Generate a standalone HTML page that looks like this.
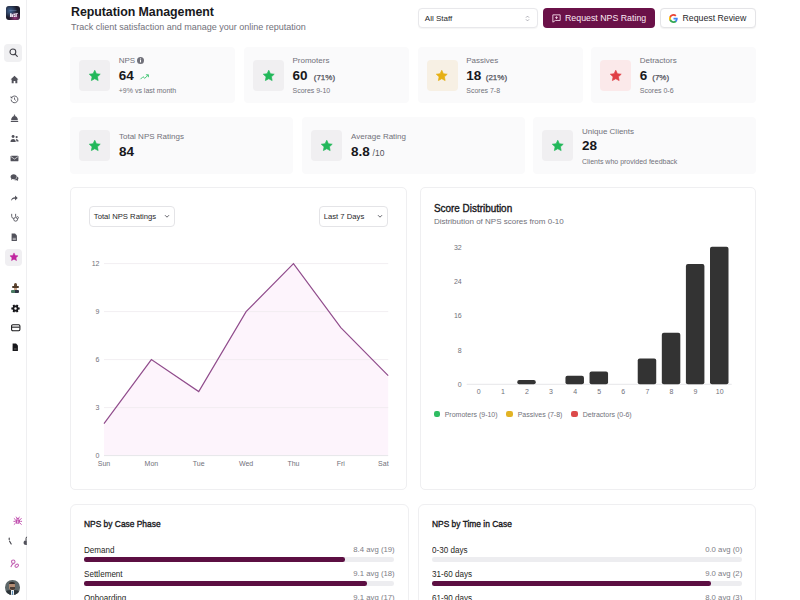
<!DOCTYPE html>
<html><head><meta charset="utf-8"><title>Reputation Management</title>
<style>
html,body{margin:0;padding:0;width:800px;height:600px;overflow:hidden;background:#fff;}
body{position:relative;font-family:"Liberation Sans", sans-serif;}
.t{position:absolute;white-space:nowrap;}
.r{position:absolute;}
svg.r{overflow:visible;}
</style></head><body>
<div class="r" style="left:0.00px;top:0.00px;width:27.00px;height:600.00px;background:#fff;border-radius:0px;border-right:1px solid #efeff1;box-sizing:border-box;"></div>
<svg class="r" style="left:6.00px;top:6.00px;" width="14" height="14" viewBox="0 0 14 14"><defs><radialGradient id="lg1" cx="0.3" cy="0.35" r="0.5"><stop offset="0" stop-color="#4a78b0" stop-opacity="0.8"/><stop offset="1" stop-color="#4a78b0" stop-opacity="0"/></radialGradient><radialGradient id="lg2" cx="0.65" cy="0.85" r="0.45"><stop offset="0" stop-color="#b03a8a" stop-opacity="0.8"/><stop offset="1" stop-color="#b03a8a" stop-opacity="0"/></radialGradient></defs><rect x="0" y="0" width="14" height="14" rx="3" fill="#1c1c2c"/><rect x="0" y="0" width="14" height="14" rx="3" fill="url(#lg1)"/><rect x="0" y="0" width="14" height="14" rx="3" fill="url(#lg2)"/><path d="M4 7.2h1.6v3.8H4zM5.8 8.2h1.4v2.8H5.8zM7.5 7.6h1.5v1.4H7.5zM7.8 9.4h1.3v1.6H7.8zM9.4 7h1.4v4H9.4zM10.9 7.4l.9-.6.3.8-.9.5z" fill="#e8e4f0"/><path d="M3.5 4.5h7" stroke="#8aa0c8" stroke-width="0.6" opacity="0.6"/></svg>
<div class="r" style="left:4.00px;top:43.50px;width:18.00px;height:18.00px;background:#f0f0f2;border-radius:4px;"></div>
<svg class="r" style="left:8.50px;top:48.00px;" width="9" height="9" viewBox="0 0 9 9"><circle cx="3.9" cy="3.9" r="2.9" fill="none" stroke="#3f3f46" stroke-width="1.05"/><path d="M6.1 6.1l2.2 2.2" stroke="#3f3f46" stroke-width="1.15" stroke-linecap="round"/></svg>
<svg class="r" style="left:9.50px;top:74.50px;" width="9" height="9" viewBox="0 0 16 16"><path d="M8 1.5L1 8h2v6.5h3.5v-4h3v4H13V8h2z" fill="#52525b"/></svg>
<svg class="r" style="left:9.50px;top:94.50px;" width="9" height="9" viewBox="0 0 16 16"><path d="M3.2 4.2A6 6 0 1 1 2 8" fill="none" stroke="#52525b" stroke-width="1.6"/><path d="M1.2 1.8v4h4z" fill="#52525b"/><path d="M8 4.5V8l2.3 1.6" fill="none" stroke="#52525b" stroke-width="1.5"/></svg>
<svg class="r" style="left:9.50px;top:113.50px;" width="9" height="9" viewBox="0 0 16 16"><circle cx="8" cy="2.2" r="1.3" fill="#52525b"/><path d="M2 11.2C2 6.6 4.6 3.4 8 3.4s6 3.2 6 7.8z" fill="#52525b"/><rect x="1.2" y="12.4" width="13.6" height="1.8" rx=".9" fill="#52525b"/></svg>
<svg class="r" style="left:9.50px;top:133.50px;" width="9" height="9" viewBox="0 0 16 16"><circle cx="5.5" cy="4.5" r="2.6" fill="#52525b"/><path d="M0.8 14c0-3 2-5 4.7-5s4.7 2 4.7 5z" fill="#52525b"/><circle cx="11.8" cy="5.5" r="2" fill="#52525b"/><path d="M10.5 9c2.8 0 4.7 1.6 4.7 4.2h-3.6z" fill="#52525b"/></svg>
<svg class="r" style="left:9.50px;top:153.50px;" width="9" height="9" viewBox="0 0 16 16"><rect x="1" y="3" width="14" height="10" rx="1.5" fill="#52525b"/><path d="M1.5 4.5L8 9l6.5-4.5" fill="none" stroke="#fff" stroke-width="1.2"/></svg>
<svg class="r" style="left:9.50px;top:173.00px;" width="9" height="9" viewBox="0 0 16 16"><path d="M1 6.5C1 3.5 3.5 2 6.5 2S12 3.5 12 6.5 9.5 11 6.5 11c-.8 0-1.5-.1-2.1-.3L1.8 12.5l.6-2.6C1.5 9 1 7.8 1 6.5z" fill="#52525b"/><path d="M13 6c1.3.8 2 2 2 3.4 0 1-.4 1.9-1 2.6l.4 2.2-2.2-1.3c-.5.2-1.1.2-1.7.2-1.5 0-2.8-.5-3.7-1.3C10.4 11.6 13 9.3 13 6z" fill="#52525b"/></svg>
<svg class="r" style="left:9.75px;top:193.75px;" width="8.5" height="8.5" viewBox="0 0 16 16"><path d="M2 13c0-4.5 3-7 7.5-7V3l5 4.5-5 4.5V9C6 9 3.8 10.2 2 13z" fill="#52525b"/></svg>
<svg class="r" style="left:9.50px;top:213.00px;" width="9" height="9" viewBox="0 0 16 16"><path d="M3 1.5v4.5a3.5 3.5 0 0 0 7 0V1.5" fill="none" stroke="#52525b" stroke-width="1.6"/><path d="M6.5 9.5v1.5a3.5 3.5 0 0 0 7 0v-1" fill="none" stroke="#52525b" stroke-width="1.6"/><circle cx="13.2" cy="8.3" r="1.8" fill="none" stroke="#52525b" stroke-width="1.5"/></svg>
<svg class="r" style="left:9.75px;top:233.25px;" width="8.5" height="8.5" viewBox="0 0 16 16"><path d="M3 1h6.5L13 4.5V15H3z" fill="#52525b"/><path d="M5 10h6M5 12.3h6" stroke="#fff" stroke-width="1"/></svg>
<div class="r" style="left:4.50px;top:248.50px;width:17.00px;height:17.00px;background:#f0eff2;border-radius:4px;"></div>
<svg class="r" style="left:9.00px;top:252.30px;" width="10" height="10" viewBox="0 0 24 24"><path d="M12 2.2l2.95 6.2 6.75.85-4.95 4.65 1.25 6.7L12 17.3l-5.99 3.3 1.25-6.7L2.3 9.25l6.75-.85z" fill="#c0269f" stroke="#c0269f" stroke-width="1.2" stroke-linejoin="round"/></svg>
<div class="r" style="left:11px;top:282.5px;width:8px;height:10px;"><div style="position:absolute;left:2.5px;top:0;width:3px;height:4px;background:#5e4630;border-radius:1.5px 1.5px 0 0"></div><div style="position:absolute;left:0.5px;top:3.6px;width:7px;height:1.8px;background:#4e3a28;border-radius:1px"></div><div style="position:absolute;left:2.5px;top:5px;width:3px;height:2.2px;background:#c9a58a"></div><div style="position:absolute;left:0;top:7px;width:4px;height:3px;background:#4a7a62;border-radius:1px 0 0 1px"></div><div style="position:absolute;left:4px;top:7px;width:4px;height:3px;background:#2f3442;border-radius:0 1px 1px 0"></div></div>
<svg class="r" style="left:10.70px;top:303.50px;" width="9" height="9" viewBox="0 0 16 16"><path d="M13.24 6.03 L15.42 6.34 L15.42 9.66 L13.24 9.97 L12.85 10.80 L12.33 11.55 L13.14 13.59 L10.27 15.25 L8.91 13.53 L8.00 13.60 L7.09 13.53 L5.73 15.25 L2.86 13.59 L3.67 11.55 L3.15 10.80 L2.76 9.97 L0.58 9.66 L0.58 6.34 L2.76 6.03 L3.15 5.20 L3.67 4.45 L2.86 2.41 L5.73 0.75 L7.09 2.47 L8.00 2.40 L8.91 2.47 L10.27 0.75 L13.14 2.41 L12.33 4.45 L12.85 5.20z" fill="#18181b"/><circle cx="8" cy="8" r="2.1" fill="#fff"/></svg>
<svg class="r" style="left:10.65px;top:322.75px;" width="9.5" height="9.5" viewBox="0 0 16 16"><rect x="1" y="3" width="14" height="10" rx="2" fill="none" stroke="#18181b" stroke-width="1.8"/><path d="M1.5 7h13" stroke="#18181b" stroke-width="1.8"/></svg>
<svg class="r" style="left:10.85px;top:343.25px;" width="8.5" height="8.5" viewBox="0 0 16 16"><path d="M3 1h6.5L13 4.5V15H3z" fill="#18181b"/><rect x="5.5" y="10" width="5" height="2.5" fill="#555"/></svg>
<svg class="r" style="left:13.05px;top:516.05px;" width="9.5" height="9.5" viewBox="0 0 16 16"><path d="M4.2 6.5h7.6v3.2a3.8 3.8 0 0 1-7.6 0z" fill="#c04fae"/><path d="M5.2 6c0-1.7 1.3-3 2.8-3s2.8 1.3 2.8 3z" fill="#c04fae"/><path d="M8 7.5v5.3" stroke="#fff" stroke-width="1.3"/><path d="M.8 9h3M12.2 9h3M1.5 4l2.8 2.2M14.5 4l-2.8 2.2M1.5 14.5l2.8-2.5M14.5 14.5l-2.8-2.5M5 1.2l1.2 2M11 1.2l-1.2 2" stroke="#c04fae" stroke-width="1.6"/></svg>
<svg class="r" style="left:8.00px;top:537.00px;" width="4" height="8" viewBox="0 0 4 8"><path d="M1.2 1v1.6M1.6 4.2l1.6 2.8" stroke="#3f3f46" stroke-width="1.1" stroke-linecap="round"/></svg>
<svg class="r" style="left:22.50px;top:535.50px;" width="5" height="10" viewBox="0 0 5 10"><path d="M3.6 .8c-.6 1-.7 2-.6 3.2" stroke="#3f3f46" stroke-width="1" fill="none"/><path d="M3 4.2c-1.6 0-2.4 1.2-2.4 2.5S1.6 9 3 9h.8V4.3z" fill="#52525b"/></svg>
<svg class="r" style="left:9.75px;top:558.75px;" width="9.5" height="9.5" viewBox="0 0 16 16"><circle cx="5.5" cy="4.5" r="2.9" fill="none" stroke="#c25fb2" stroke-width="1.8"/><path d="M1.5 13.8c.5-2.8 1.8-4.6 4-5.2" fill="none" stroke="#c25fb2" stroke-width="1.8"/><ellipse cx="11.3" cy="11.3" rx="3.2" ry="2.3" transform="rotate(-35 11.3 11.3)" fill="none" stroke="#c25fb2" stroke-width="1.8"/></svg>
<div class="r" style="left:5px;top:580px;width:14.5px;height:14.5px;border-radius:50%;background:#5d6769;overflow:hidden"><div style="position:absolute;left:4.3px;top:2.2px;width:6px;height:7.5px;border-radius:45% 45% 40% 40%;background:#b38d74"></div><div style="position:absolute;left:4.1px;top:1.8px;width:6.4px;height:2.4px;border-radius:3px 3px 0 0;background:#2e2a28"></div><div style="position:absolute;left:4.6px;top:6.5px;width:5.4px;height:3.2px;border-radius:0 0 45% 45%;background:#4a3c34"></div><div style="position:absolute;left:1px;top:10px;width:12.5px;height:6px;border-radius:40% 40% 0 0;background:#2c3438"></div><div style="position:absolute;left:5.6px;top:9.8px;width:3.4px;height:5px;background:#e6ecef"></div><div style="position:absolute;left:6.7px;top:10.5px;width:1.2px;height:4.5px;background:#5b8fb8"></div></div>
<div class="t" style="left:71.00px;top:6.20px;font-size:12.4px;line-height:12.4px;color:#18181b;font-weight:700;letter-spacing:-0.05px;">Reputation Management</div>
<div class="t" style="left:71.00px;top:22.88px;font-size:9px;line-height:9px;color:#71717a;font-weight:400;">Track client satisfaction and manage your online reputation</div>
<div class="r" style="left:417.50px;top:8.00px;width:120.50px;height:20.00px;background:#fff;border:1px solid #e8e8eb;box-sizing:border-box;border-radius:4px;box-shadow:0 0.5px 1px rgba(0,0,0,0.04);"></div>
<div class="t" style="left:424.80px;top:14.53px;font-size:8px;line-height:8px;color:#27272a;font-weight:400;">All Staff</div>
<svg class="r" style="left:524.50px;top:14.50px;" width="5" height="7" viewBox="0 0 5 7"><path d="M1 2.6L2.5 1.1 4 2.6M1 4.4L2.5 5.9 4 4.4" fill="none" stroke="#a1a1aa" stroke-width="0.9"/></svg>
<div class="r" style="left:543.00px;top:8.20px;width:112.00px;height:19.50px;background:#6a1148;border-radius:4px;"></div>
<svg class="r" style="left:551.50px;top:13.50px;" width="9" height="9" viewBox="0 0 16 16"><path d="M1.5 1.5h13v10H6l-4.5 3z" fill="none" stroke="#f5d9ea" stroke-width="1.6" stroke-linejoin="round"/><path d="M8 4v5M5.5 6.5h5" stroke="#f5d9ea" stroke-width="1.5"/></svg>
<div class="t" style="left:565.00px;top:14.25px;font-size:8.8px;line-height:8.8px;color:#fbe9f4;font-weight:400;">Request NPS Rating</div>
<div class="r" style="left:659.50px;top:8.20px;width:96.50px;height:20.00px;background:#fff;border:1px solid #e4e4e7;box-sizing:border-box;border-radius:4px;box-shadow:0 0.5px 1px rgba(0,0,0,0.05);"></div>
<svg class="r" style="left:668.50px;top:13.80px;" width="9" height="9" viewBox="0 0 16 16"><path d="M15.5 8.2c0-.6-.05-1.1-.15-1.6H8v3h4.2c-.2 1-.8 1.9-1.7 2.4v2h2.7c1.5-1.4 2.3-3.4 2.3-5.8z" fill="#4285F4"/><path d="M8 16c2.2 0 4-.7 5.3-2l-2.7-2c-.7.5-1.6.8-2.6.8-2 0-3.8-1.4-4.4-3.3H.8v2.1C2.1 14.3 4.9 16 8 16z" fill="#34A853"/><path d="M3.6 9.5c-.2-.5-.3-1-.3-1.5s.1-1 .3-1.5V4.4H.8C.3 5.5 0 6.7 0 8s.3 2.5.8 3.6z" fill="#FBBC05"/><path d="M8 3.2c1.2 0 2.2.4 3 1.2l2.3-2.3C11.9.8 10.1 0 8 0 4.9 0 2.1 1.7.8 4.4l2.8 2.1C4.2 4.6 6 3.2 8 3.2z" fill="#EA4335"/></svg>
<div class="t" style="left:682.50px;top:14.39px;font-size:8.75px;line-height:8.75px;color:#27272a;font-weight:400;">Request Review</div>
<div class="r" style="left:70.00px;top:46.80px;width:165.00px;height:56.70px;background:#fafafb;border-radius:4px;"></div>
<div class="r" style="left:79.00px;top:60.00px;width:31.00px;height:31.00px;background:#f0eff1;border-radius:4px;"></div>
<svg class="r" style="left:87.75px;top:68.75px;" width="13.5" height="13.5" viewBox="0 0 24 24"><path d="M12 2.2l2.95 6.2 6.75.85-4.95 4.65 1.25 6.7L12 17.3l-5.99 3.3 1.25-6.7L2.3 9.25l6.75-.85z" fill="#22b85a" stroke="#22b85a" stroke-width="1.2" stroke-linejoin="round"/></svg>
<div class="t" style="left:118.75px;top:57.23px;font-size:8px;line-height:8px;color:#71717a;font-weight:400;">NPS</div>
<div class="t" style="left:118.75px;top:68.87px;font-size:13.5px;line-height:13.5px;color:#18181b;font-weight:700;">64</div>
<div class="t" style="left:118.75px;top:86.87px;font-size:7px;line-height:7px;color:#71717a;font-weight:400;">+9% vs last month</div>
<div class="r" style="left:243.75px;top:46.80px;width:165.00px;height:56.70px;background:#fafafb;border-radius:4px;"></div>
<div class="r" style="left:252.75px;top:60.00px;width:31.00px;height:31.00px;background:#f0eff1;border-radius:4px;"></div>
<svg class="r" style="left:261.50px;top:68.75px;" width="13.5" height="13.5" viewBox="0 0 24 24"><path d="M12 2.2l2.95 6.2 6.75.85-4.95 4.65 1.25 6.7L12 17.3l-5.99 3.3 1.25-6.7L2.3 9.25l6.75-.85z" fill="#22b85a" stroke="#22b85a" stroke-width="1.2" stroke-linejoin="round"/></svg>
<div class="t" style="left:292.50px;top:57.23px;font-size:8px;line-height:8px;color:#71717a;font-weight:400;">Promoters</div>
<div class="t" style="left:292.50px;top:68.87px;font-size:13.5px;line-height:13.5px;color:#18181b;font-weight:700;">60</div>
<div class="t" style="left:313.75px;top:73.83px;font-size:8px;line-height:8px;color:#52525b;font-weight:400;-webkit-text-stroke:0.25px #52525b;">(71%)</div>
<div class="t" style="left:292.50px;top:86.87px;font-size:7px;line-height:7px;color:#71717a;font-weight:400;">Scores 9-10</div>
<div class="r" style="left:417.50px;top:46.80px;width:165.00px;height:56.70px;background:#fafafb;border-radius:4px;"></div>
<div class="r" style="left:426.50px;top:60.00px;width:31.00px;height:31.00px;background:#f7f0e4;border-radius:4px;"></div>
<svg class="r" style="left:435.25px;top:68.75px;" width="13.5" height="13.5" viewBox="0 0 24 24"><path d="M12 2.2l2.95 6.2 6.75.85-4.95 4.65 1.25 6.7L12 17.3l-5.99 3.3 1.25-6.7L2.3 9.25l6.75-.85z" fill="#e6b014" stroke="#e6b014" stroke-width="1.2" stroke-linejoin="round"/></svg>
<div class="t" style="left:466.25px;top:57.23px;font-size:8px;line-height:8px;color:#71717a;font-weight:400;">Passives</div>
<div class="t" style="left:466.25px;top:68.87px;font-size:13.5px;line-height:13.5px;color:#18181b;font-weight:700;">18</div>
<div class="t" style="left:485.75px;top:73.83px;font-size:8px;line-height:8px;color:#52525b;font-weight:400;-webkit-text-stroke:0.25px #52525b;">(21%)</div>
<div class="t" style="left:466.25px;top:86.87px;font-size:7px;line-height:7px;color:#71717a;font-weight:400;">Scores 7-8</div>
<div class="r" style="left:591.00px;top:46.80px;width:165.00px;height:56.70px;background:#fafafb;border-radius:4px;"></div>
<div class="r" style="left:600.00px;top:60.00px;width:31.00px;height:31.00px;background:#fbe9ea;border-radius:4px;"></div>
<svg class="r" style="left:608.75px;top:68.75px;" width="13.5" height="13.5" viewBox="0 0 24 24"><path d="M12 2.2l2.95 6.2 6.75.85-4.95 4.65 1.25 6.7L12 17.3l-5.99 3.3 1.25-6.7L2.3 9.25l6.75-.85z" fill="#e03e45" stroke="#e03e45" stroke-width="1.2" stroke-linejoin="round"/></svg>
<div class="t" style="left:639.75px;top:57.23px;font-size:8px;line-height:8px;color:#71717a;font-weight:400;">Detractors</div>
<div class="t" style="left:639.75px;top:68.87px;font-size:13.5px;line-height:13.5px;color:#18181b;font-weight:700;">6</div>
<div class="t" style="left:652.25px;top:73.83px;font-size:8px;line-height:8px;color:#52525b;font-weight:400;-webkit-text-stroke:0.25px #52525b;">(7%)</div>
<div class="t" style="left:639.75px;top:86.87px;font-size:7px;line-height:7px;color:#71717a;font-weight:400;">Scores 0-6</div>
<svg class="r" style="left:137.00px;top:57.20px;" width="7" height="7" viewBox="0 0 7 7"><circle cx="3.5" cy="3.5" r="3.5" fill="#71717a"/><path d="M3.5 3v2.4" stroke="#fff" stroke-width="1"/><circle cx="3.5" cy="1.9" r=".55" fill="#fff"/></svg>
<svg class="r" style="left:139.50px;top:73.50px;" width="9" height="6" viewBox="0 0 9 6"><path d="M.5 5.2L3 2.7l1.8 1.6L8.2 1" fill="none" stroke="#34c26a" stroke-width="0.9"/><path d="M5.9 .8h2.5v2.4" fill="none" stroke="#34c26a" stroke-width="0.9"/></svg>
<div class="r" style="left:70.00px;top:117.40px;width:223.00px;height:56.30px;background:#fafafb;border-radius:4px;"></div>
<div class="r" style="left:79.00px;top:130.00px;width:31.00px;height:31.00px;background:#f0eff1;border-radius:4px;"></div>
<svg class="r" style="left:87.75px;top:138.95px;" width="13.5" height="13.5" viewBox="0 0 24 24"><path d="M12 2.2l2.95 6.2 6.75.85-4.95 4.65 1.25 6.7L12 17.3l-5.99 3.3 1.25-6.7L2.3 9.25l6.75-.85z" fill="#22b85a" stroke="#22b85a" stroke-width="1.2" stroke-linejoin="round"/></svg>
<div class="t" style="left:119.00px;top:133.13px;font-size:8px;line-height:8px;color:#71717a;font-weight:400;">Total NPS Ratings</div>
<div class="t" style="left:119.00px;top:144.87px;font-size:13.5px;line-height:13.5px;color:#18181b;font-weight:700;">84</div>
<div class="r" style="left:302.00px;top:117.40px;width:223.00px;height:56.30px;background:#fafafb;border-radius:4px;"></div>
<div class="r" style="left:311.00px;top:130.00px;width:31.00px;height:31.00px;background:#f0eff1;border-radius:4px;"></div>
<svg class="r" style="left:319.75px;top:138.95px;" width="13.5" height="13.5" viewBox="0 0 24 24"><path d="M12 2.2l2.95 6.2 6.75.85-4.95 4.65 1.25 6.7L12 17.3l-5.99 3.3 1.25-6.7L2.3 9.25l6.75-.85z" fill="#22b85a" stroke="#22b85a" stroke-width="1.2" stroke-linejoin="round"/></svg>
<div class="t" style="left:351.00px;top:133.13px;font-size:8px;line-height:8px;color:#71717a;font-weight:400;">Average Rating</div>
<div class="t" style="left:351.00px;top:144.87px;font-size:13.5px;line-height:13.5px;color:#18181b;font-weight:700;">8.8</div>
<div class="t" style="left:372.60px;top:149.10px;font-size:8.5px;line-height:8.5px;color:#52525b;font-weight:400;">/10</div>
<div class="r" style="left:533.00px;top:117.40px;width:223.00px;height:56.30px;background:#fafafb;border-radius:4px;"></div>
<div class="r" style="left:542.00px;top:130.00px;width:31.00px;height:31.00px;background:#f0eff1;border-radius:4px;"></div>
<svg class="r" style="left:550.75px;top:138.95px;" width="13.5" height="13.5" viewBox="0 0 24 24"><path d="M12 2.2l2.95 6.2 6.75.85-4.95 4.65 1.25 6.7L12 17.3l-5.99 3.3 1.25-6.7L2.3 9.25l6.75-.85z" fill="#22b85a" stroke="#22b85a" stroke-width="1.2" stroke-linejoin="round"/></svg>
<div class="t" style="left:582.00px;top:127.73px;font-size:8px;line-height:8px;color:#71717a;font-weight:400;">Unique Clients</div>
<div class="t" style="left:582.00px;top:139.27px;font-size:13.5px;line-height:13.5px;color:#18181b;font-weight:700;">28</div>
<div class="t" style="left:582.00px;top:157.57px;font-size:7px;line-height:7px;color:#71717a;font-weight:400;">Clients who provided feedback</div>
<div class="r" style="left:70.00px;top:187.00px;width:336.50px;height:303.00px;background:#fff;border:1px solid #efeff1;box-sizing:border-box;border-radius:5px;"></div>
<div class="r" style="left:88.50px;top:205.50px;width:86.50px;height:21.00px;background:#fff;border:1px solid #e4e4e7;box-sizing:border-box;border-radius:4px;"></div>
<div class="t" style="left:93.80px;top:212.78px;font-size:7.7px;line-height:7.7px;color:#27272a;font-weight:400;">Total NPS Ratings</div>
<svg class="r" style="left:163.50px;top:213.50px;" width="6" height="5" viewBox="0 0 6 5"><path d="M1 1.2l2 2 2-2" fill="none" stroke="#52525b" stroke-width="0.9"/></svg>
<div class="r" style="left:318.70px;top:205.50px;width:69.80px;height:21.00px;background:#fff;border:1px solid #e4e4e7;box-sizing:border-box;border-radius:4px;"></div>
<div class="t" style="left:323.70px;top:212.78px;font-size:7.7px;line-height:7.7px;color:#27272a;font-weight:400;">Last 7 Days</div>
<svg class="r" style="left:376.50px;top:213.50px;" width="6" height="5" viewBox="0 0 6 5"><path d="M1 1.2l2 2 2-2" fill="none" stroke="#52525b" stroke-width="0.9"/></svg>
<svg class="r" style="left:0.00px;top:0.00px;" width="800" height="600" viewBox="0 0 800 600"><polygon points="104,455.6 104.00,423.60 151.37,359.60 198.73,391.60 246.10,311.60 293.47,263.60 340.83,327.60 388.20,375.60 388.2,455.6" fill="#fdf4fc"/><line x1="104" y1="407.60" x2="388.2" y2="407.60" stroke="#eeeaee" stroke-opacity="0.8" stroke-width="1"/><line x1="104" y1="359.60" x2="388.2" y2="359.60" stroke="#eeeaee" stroke-opacity="0.8" stroke-width="1"/><line x1="104" y1="311.60" x2="388.2" y2="311.60" stroke="#eeeaee" stroke-opacity="0.8" stroke-width="1"/><line x1="104" y1="263.60" x2="388.2" y2="263.60" stroke="#eeeaee" stroke-opacity="0.8" stroke-width="1"/><line x1="104" y1="455.6" x2="388.2" y2="455.6" stroke="#e6e6e9" stroke-width="1"/><polyline points="104.00,423.60 151.37,359.60 198.73,391.60 246.10,311.60 293.47,263.60 340.83,327.60 388.20,375.60" fill="none" stroke="#904c8c" stroke-width="1.2" stroke-linejoin="miter"/></svg>
<div class="t" style="right:700.50px;top:452.47px;font-size:7px;line-height:7px;color:#71717a;font-weight:400;">0</div>
<div class="t" style="right:700.50px;top:404.47px;font-size:7px;line-height:7px;color:#71717a;font-weight:400;">3</div>
<div class="t" style="right:700.50px;top:356.47px;font-size:7px;line-height:7px;color:#71717a;font-weight:400;">6</div>
<div class="t" style="right:700.50px;top:308.47px;font-size:7px;line-height:7px;color:#71717a;font-weight:400;">9</div>
<div class="t" style="right:700.50px;top:260.47px;font-size:7px;line-height:7px;color:#71717a;font-weight:400;">12</div>
<div class="t" style="left:4.00px;width:200px;text-align:center;top:459.57px;font-size:7px;line-height:7px;color:#71717a;font-weight:400;">Sun</div>
<div class="t" style="left:51.37px;width:200px;text-align:center;top:459.57px;font-size:7px;line-height:7px;color:#71717a;font-weight:400;">Mon</div>
<div class="t" style="left:98.73px;width:200px;text-align:center;top:459.57px;font-size:7px;line-height:7px;color:#71717a;font-weight:400;">Tue</div>
<div class="t" style="left:146.10px;width:200px;text-align:center;top:459.57px;font-size:7px;line-height:7px;color:#71717a;font-weight:400;">Wed</div>
<div class="t" style="left:193.47px;width:200px;text-align:center;top:459.57px;font-size:7px;line-height:7px;color:#71717a;font-weight:400;">Thu</div>
<div class="t" style="left:240.83px;width:200px;text-align:center;top:459.57px;font-size:7px;line-height:7px;color:#71717a;font-weight:400;">Fri</div>
<div class="t" style="right:411.40px;top:459.57px;font-size:7px;line-height:7px;color:#71717a;font-weight:400;">Sat</div>
<div class="r" style="left:420.00px;top:187.00px;width:336.00px;height:303.00px;background:#fff;border:1px solid #efeff1;box-sizing:border-box;border-radius:5px;"></div>
<div class="t" style="left:433.90px;top:203.94px;font-size:10px;line-height:10px;color:#18181b;font-weight:400;transform:scaleX(0.99);transform-origin:0 0;-webkit-text-stroke:0.35px #18181b;">Score Distribution</div>
<div class="t" style="left:433.90px;top:218.23px;font-size:8px;line-height:8px;color:#71717a;font-weight:400;">Distribution of NPS scores from 0-10</div>
<svg class="r" style="left:0.00px;top:0.00px;" width="800" height="600" viewBox="0 0 800 600"><line x1="466.7" y1="384.3" x2="731.7" y2="384.3" stroke="#e6e6e9" stroke-width="1"/><rect x="517.28" y="380.00" width="18.5" height="4.30" rx="2" fill="#333333"/><rect x="565.46" y="375.70" width="18.5" height="8.60" rx="2" fill="#333333"/><rect x="589.55" y="371.40" width="18.5" height="12.90" rx="2" fill="#333333"/><rect x="637.73" y="358.50" width="18.5" height="25.80" rx="2" fill="#333333"/><rect x="661.82" y="332.70" width="18.5" height="51.60" rx="2" fill="#333333"/><rect x="685.91" y="263.90" width="18.5" height="120.40" rx="2" fill="#333333"/><rect x="710.00" y="246.70" width="18.5" height="137.60" rx="2" fill="#333333"/></svg>
<div class="t" style="right:338.30px;top:381.17px;font-size:7px;line-height:7px;color:#71717a;font-weight:400;">0</div>
<div class="t" style="right:338.30px;top:346.77px;font-size:7px;line-height:7px;color:#71717a;font-weight:400;">8</div>
<div class="t" style="right:338.30px;top:312.37px;font-size:7px;line-height:7px;color:#71717a;font-weight:400;">16</div>
<div class="t" style="right:338.30px;top:277.97px;font-size:7px;line-height:7px;color:#71717a;font-weight:400;">24</div>
<div class="t" style="right:338.30px;top:243.57px;font-size:7px;line-height:7px;color:#71717a;font-weight:400;">32</div>
<div class="t" style="left:378.75px;width:200px;text-align:center;top:388.07px;font-size:7px;line-height:7px;color:#71717a;font-weight:400;">0</div>
<div class="t" style="left:402.84px;width:200px;text-align:center;top:388.07px;font-size:7px;line-height:7px;color:#71717a;font-weight:400;">1</div>
<div class="t" style="left:426.93px;width:200px;text-align:center;top:388.07px;font-size:7px;line-height:7px;color:#71717a;font-weight:400;">2</div>
<div class="t" style="left:451.02px;width:200px;text-align:center;top:388.07px;font-size:7px;line-height:7px;color:#71717a;font-weight:400;">3</div>
<div class="t" style="left:475.11px;width:200px;text-align:center;top:388.07px;font-size:7px;line-height:7px;color:#71717a;font-weight:400;">4</div>
<div class="t" style="left:499.20px;width:200px;text-align:center;top:388.07px;font-size:7px;line-height:7px;color:#71717a;font-weight:400;">5</div>
<div class="t" style="left:523.29px;width:200px;text-align:center;top:388.07px;font-size:7px;line-height:7px;color:#71717a;font-weight:400;">6</div>
<div class="t" style="left:547.38px;width:200px;text-align:center;top:388.07px;font-size:7px;line-height:7px;color:#71717a;font-weight:400;">7</div>
<div class="t" style="left:571.47px;width:200px;text-align:center;top:388.07px;font-size:7px;line-height:7px;color:#71717a;font-weight:400;">8</div>
<div class="t" style="left:595.56px;width:200px;text-align:center;top:388.07px;font-size:7px;line-height:7px;color:#71717a;font-weight:400;">9</div>
<div class="t" style="left:619.65px;width:200px;text-align:center;top:388.07px;font-size:7px;line-height:7px;color:#71717a;font-weight:400;">10</div>
<div class="r" style="left:433.80px;top:410.80px;width:6.40px;height:6.40px;background:#2fbd62;border-radius:2.2px;"></div>
<div class="t" style="left:444.70px;top:410.87px;font-size:7px;line-height:7px;color:#71717a;font-weight:400;">Promoters (9-10)</div>
<div class="r" style="left:506.30px;top:410.80px;width:6.40px;height:6.40px;background:#e2b324;border-radius:2.2px;"></div>
<div class="t" style="left:517.70px;top:410.87px;font-size:7px;line-height:7px;color:#71717a;font-weight:400;">Passives (7-8)</div>
<div class="r" style="left:571.30px;top:410.80px;width:6.40px;height:6.40px;background:#dc4a4a;border-radius:2.2px;"></div>
<div class="t" style="left:582.70px;top:410.87px;font-size:7px;line-height:7px;color:#71717a;font-weight:400;">Detractors (0-6)</div>
<div class="r" style="left:70.00px;top:503.50px;width:338.50px;height:120.00px;background:#fff;border:1px solid #efeff1;box-sizing:border-box;border-radius:6px;"></div>
<div class="t" style="left:84.40px;top:519.85px;font-size:8.8px;line-height:8.8px;color:#18181b;font-weight:400;transform:scaleX(0.955);transform-origin:0 0;-webkit-text-stroke:0.35px #18181b;">NPS by Case Phase</div>
<div class="t" style="left:84.40px;top:545.50px;font-size:8.5px;line-height:8.5px;color:#1f1f23;font-weight:400;transform:scaleX(0.95);transform-origin:0 0;">Demand</div>
<div class="t" style="right:405.60px;top:545.93px;font-size:8px;line-height:8px;color:#7c7c85;font-weight:400;transform:scaleX(0.97);transform-origin:100% 0;">8.4 avg (19)</div>
<div class="r" style="left:84.40px;top:557.40px;width:310.00px;height:4.50px;background:#ededf0;border-radius:2.25px;"></div>
<div class="r" style="left:84.40px;top:557.40px;width:260.70px;height:4.50px;background:#5c0f42;border-radius:2.25px;"></div>
<div class="t" style="left:84.40px;top:569.50px;font-size:8.5px;line-height:8.5px;color:#1f1f23;font-weight:400;transform:scaleX(0.95);transform-origin:0 0;">Settlement</div>
<div class="t" style="right:405.60px;top:569.93px;font-size:8px;line-height:8px;color:#7c7c85;font-weight:400;transform:scaleX(0.97);transform-origin:100% 0;">9.1 avg (18)</div>
<div class="r" style="left:84.40px;top:581.40px;width:310.00px;height:4.50px;background:#ededf0;border-radius:2.25px;"></div>
<div class="r" style="left:84.40px;top:581.40px;width:282.40px;height:4.50px;background:#5c0f42;border-radius:2.25px;"></div>
<div class="t" style="left:84.40px;top:593.50px;font-size:8.5px;line-height:8.5px;color:#1f1f23;font-weight:400;transform:scaleX(0.95);transform-origin:0 0;">Onboarding</div>
<div class="t" style="right:405.60px;top:593.93px;font-size:8px;line-height:8px;color:#7c7c85;font-weight:400;transform:scaleX(0.97);transform-origin:100% 0;">9.1 avg (17)</div>
<div class="r" style="left:84.40px;top:605.40px;width:310.00px;height:4.50px;background:#ededf0;border-radius:2.25px;"></div>
<div class="r" style="left:84.40px;top:605.40px;width:282.40px;height:4.50px;background:#5c0f42;border-radius:2.25px;"></div>
<div class="r" style="left:417.50px;top:503.50px;width:338.50px;height:120.00px;background:#fff;border:1px solid #efeff1;box-sizing:border-box;border-radius:6px;"></div>
<div class="t" style="left:431.90px;top:519.85px;font-size:8.8px;line-height:8.8px;color:#18181b;font-weight:400;transform:scaleX(0.955);transform-origin:0 0;-webkit-text-stroke:0.35px #18181b;">NPS by Time in Case</div>
<div class="t" style="left:431.90px;top:545.50px;font-size:8.5px;line-height:8.5px;color:#1f1f23;font-weight:400;transform:scaleX(0.95);transform-origin:0 0;">0-30 days</div>
<div class="t" style="right:58.10px;top:545.93px;font-size:8px;line-height:8px;color:#7c7c85;font-weight:400;transform:scaleX(0.97);transform-origin:100% 0;">0.0 avg (0)</div>
<div class="r" style="left:431.90px;top:557.40px;width:310.00px;height:4.50px;background:#ededf0;border-radius:2.25px;"></div>
<div class="t" style="left:431.90px;top:569.50px;font-size:8.5px;line-height:8.5px;color:#1f1f23;font-weight:400;transform:scaleX(0.95);transform-origin:0 0;">31-60 days</div>
<div class="t" style="right:58.10px;top:569.93px;font-size:8px;line-height:8px;color:#7c7c85;font-weight:400;transform:scaleX(0.97);transform-origin:100% 0;">9.0 avg (2)</div>
<div class="r" style="left:431.90px;top:581.40px;width:310.00px;height:4.50px;background:#ededf0;border-radius:2.25px;"></div>
<div class="r" style="left:431.90px;top:581.40px;width:279.30px;height:4.50px;background:#5c0f42;border-radius:2.25px;"></div>
<div class="t" style="left:431.90px;top:593.50px;font-size:8.5px;line-height:8.5px;color:#1f1f23;font-weight:400;transform:scaleX(0.95);transform-origin:0 0;">61-90 days</div>
<div class="t" style="right:58.10px;top:593.93px;font-size:8px;line-height:8px;color:#7c7c85;font-weight:400;transform:scaleX(0.97);transform-origin:100% 0;">8.0 avg (3)</div>
<div class="r" style="left:431.90px;top:605.40px;width:310.00px;height:4.50px;background:#ededf0;border-radius:2.25px;"></div>
<div class="r" style="left:431.90px;top:605.40px;width:248.30px;height:4.50px;background:#5c0f42;border-radius:2.25px;"></div>
</body></html>
